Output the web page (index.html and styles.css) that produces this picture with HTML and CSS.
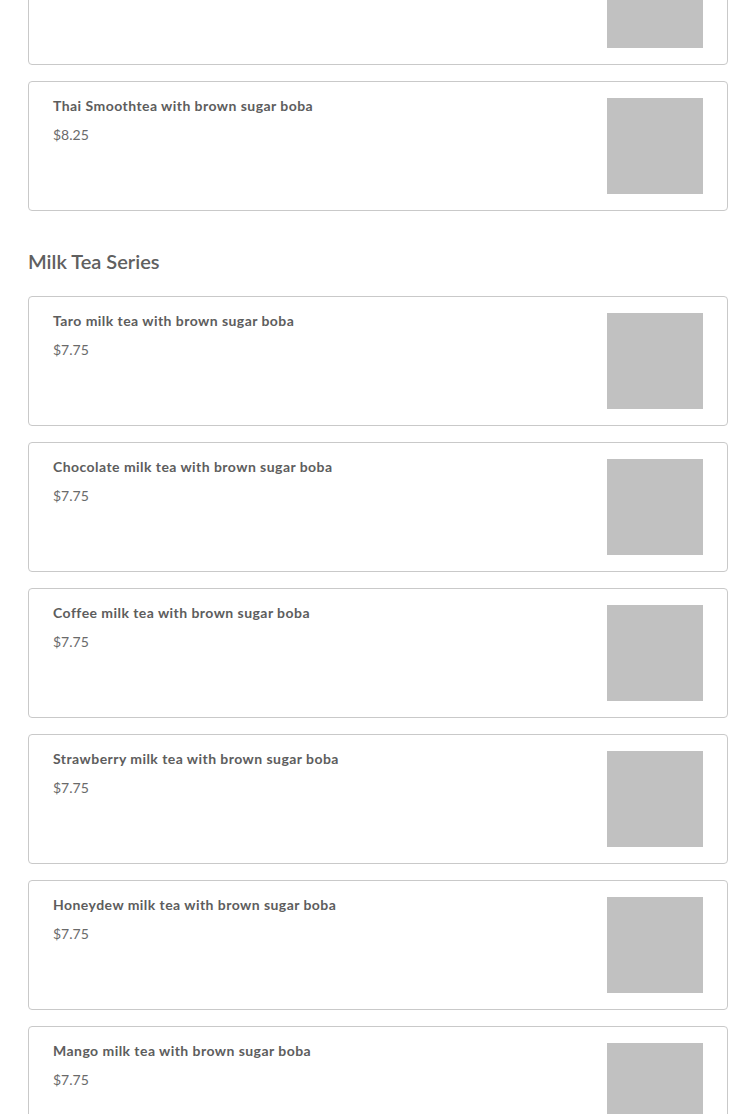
FILE: index.html
```html
<!DOCTYPE html>
<html>
<head>
<meta charset="utf-8">
<link rel="stylesheet" href="styles.css">
</head>
<body>
<main class="menu">
  <section class="section">
    <div class="list">
      <div class="card">
        <div class="info"></div>
        <div class="thumb"></div>
      </div>
      <div class="card">
        <div class="info">
          <div class="title">Thai Smoothtea with brown sugar boba</div>
          <div class="price">$8.25</div>
        </div>
        <div class="thumb"></div>
      </div>
    </div>
  </section>
  <section class="section">
    <h2 class="heading">Milk Tea Series</h2>
    <div class="list">
      <div class="card">
        <div class="info">
          <div class="title">Taro milk tea with brown sugar boba</div>
          <div class="price">$7.75</div>
        </div>
        <div class="thumb"></div>
      </div>
      <div class="card">
        <div class="info">
          <div class="title">Chocolate milk tea with brown sugar boba</div>
          <div class="price">$7.75</div>
        </div>
        <div class="thumb"></div>
      </div>
      <div class="card">
        <div class="info">
          <div class="title">Coffee milk tea with brown sugar boba</div>
          <div class="price">$7.75</div>
        </div>
        <div class="thumb"></div>
      </div>
      <div class="card">
        <div class="info">
          <div class="title">Strawberry milk tea with brown sugar boba</div>
          <div class="price">$7.75</div>
        </div>
        <div class="thumb"></div>
      </div>
      <div class="card">
        <div class="info">
          <div class="title">Honeydew milk tea with brown sugar boba</div>
          <div class="price">$7.75</div>
        </div>
        <div class="thumb"></div>
      </div>
      <div class="card">
        <div class="info">
          <div class="title">Mango milk tea with brown sugar boba</div>
          <div class="price">$7.75</div>
        </div>
        <div class="thumb"></div>
      </div>
    </div>
  </section>
</main>
</body>
</html>
```
FILE: styles.css
```css
html, body {
  margin: 0;
  padding: 0;
  background: #ffffff;
  overflow: hidden;
}
body {
  font-family: "Lato", "Liberation Sans", sans-serif;
  color: #5f5f5f;
}
.menu {
  margin-top: -65px;
  padding: 0 28px;
}
.section {
  display: flex;
  flex-direction: column;
}
.list {
  display: flex;
  flex-direction: column;
  gap: 16px;
}
.heading {
  margin: 38px 0 0;
  height: 47px;
  font-size: 20px;
  font-weight: 600;
  line-height: 24px;
  color: #606060;
}
.card {
  box-sizing: border-box;
  height: 130px;
  border: 1px solid #c9c9c9;
  border-radius: 4px;
  padding: 16px 24px;
  display: flex;
  justify-content: space-between;
  align-items: flex-start;
}
.info {
  display: flex;
  flex-direction: column;
  gap: 12px;
}
.title {
  font-size: 14px;
  font-weight: 700;
  line-height: 16px;
  letter-spacing: 0.45px;
  color: #5d5d5d;
}
.price {
  font-size: 14px;
  font-weight: 400;
  line-height: 18px;
  color: #6a6a6a;
}
.thumb {
  width: 96px;
  height: 96px;
  background: #c1c1c1;
  flex-shrink: 0;
}
```
